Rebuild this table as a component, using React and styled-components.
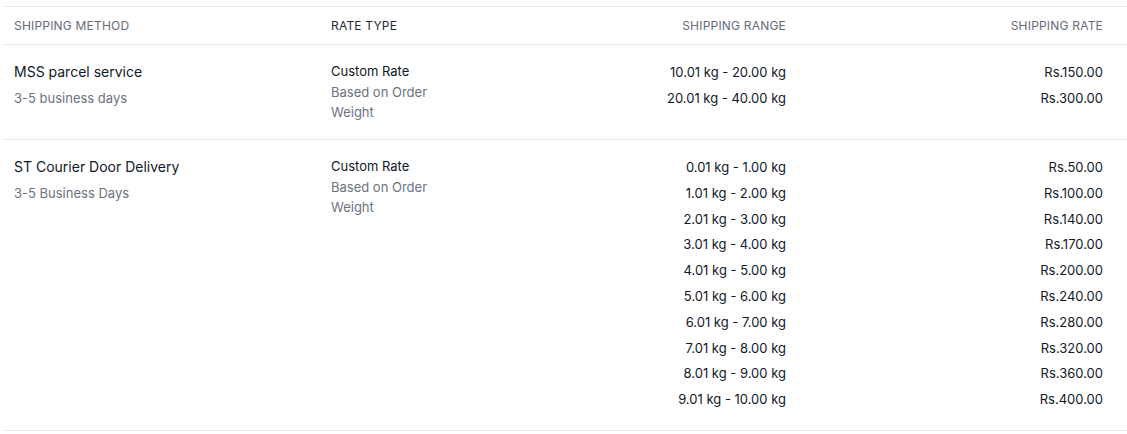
import styled, { createGlobalStyle } from "styled-components";

const GlobalStyle = createGlobalStyle`
  body {
    margin: 0;
    background: #ffffff;
    font-family: Inter, "Liberation Sans", sans-serif;
    -webkit-font-smoothing: antialiased;
  }
`;

const methods = [
  {
    name: "MSS parcel service",
    days: "3-5 business days",
    rates: [
      ["10.01 kg - 20.00 kg", "Rs.150.00"],
      ["20.01 kg - 40.00 kg", "Rs.300.00"],
    ],
  },
  {
    name: "ST Courier Door Delivery",
    days: "3-5 Business Days",
    rates: [
      ["0.01 kg - 1.00 kg", "Rs.50.00"],
      ["1.01 kg - 2.00 kg", "Rs.100.00"],
      ["2.01 kg - 3.00 kg", "Rs.140.00"],
      ["3.01 kg - 4.00 kg", "Rs.170.00"],
      ["4.01 kg - 5.00 kg", "Rs.200.00"],
      ["5.01 kg - 6.00 kg", "Rs.240.00"],
      ["6.01 kg - 7.00 kg", "Rs.280.00"],
      ["7.01 kg - 8.00 kg", "Rs.320.00"],
      ["8.01 kg - 9.00 kg", "Rs.360.00"],
      ["9.01 kg - 10.00 kg", "Rs.400.00"],
    ],
  },
];

function App() {
  return (
    <Page>
      <GlobalStyle />
      <Table>
        <HeaderRow>
          <HeadCell>Shipping Method</HeadCell>
          <HeadCell active>Rate Type</HeadCell>
          <HeadCell right>Shipping Range</HeadCell>
          <HeadCell right last>
            Shipping Rate
          </HeadCell>
        </HeaderRow>
        {methods.map((m) => (
          <Row key={m.name}>
            <Cell>
              <MethodName>{m.name}</MethodName>
              <MethodDays>{m.days}</MethodDays>
            </Cell>
            <Cell>
              <RateTitle>Custom Rate</RateTitle>
              <RateDesc>Based on Order Weight</RateDesc>
            </Cell>
            <Cell right>
              {m.rates.map(([range]) => (
                <Value key={range}>{range}</Value>
              ))}
            </Cell>
            <Cell right last>
              {m.rates.map(([range, price]) => (
                <Value key={range}>{price}</Value>
              ))}
            </Cell>
          </Row>
        ))}
      </Table>
    </Page>
  );
}

const Page = styled.div`
  padding: 6px 0 0 4px;
`;

const Table = styled.div`
  width: 100%;
  display: flex;
  flex-direction: column;
`;

const grid = `
  display: grid;
  grid-template-columns: 317px 200px 275px 1fr;
  border-bottom: 1px solid #e5e7eb;
`;

const HeaderRow = styled.div`
  ${grid}
  border-top: 1px solid #e5e7eb;
  height: 37px;
  align-items: center;
`;

const HeadCell = styled.div`
  padding: 0 ${(p) => (p.last ? "24px" : "10px")} 0 10px;
  font-size: 12px;
  letter-spacing: 0.2px;
  text-transform: uppercase;
  color: ${(p) => (p.active ? "#1f2937" : "#656b78")};
  text-align: ${(p) => (p.right ? "right" : "left")};
`;

const Row = styled.div`
  ${grid}
`;

const Cell = styled.div`
  padding: 17px ${(p) => (p.last ? "24px" : "10px")} 15px 10px;
  text-align: ${(p) => (p.right ? "right" : "left")};
`;

const MethodName = styled.div`
  font-size: 14px;
  line-height: 20px;
  color: #111827;
`;

const MethodDays = styled.div`
  margin-top: 6px;
  font-size: 13px;
  line-height: 20px;
  color: #6b7280;
`;

const RateTitle = styled.div`
  margin-top: -1px;
  font-size: 13px;
  line-height: 20px;
  color: #111827;
`;

const RateDesc = styled.div`
  margin-top: 1px;
  padding-bottom: 2px;
  width: 110px;
  font-size: 13px;
  line-height: 20px;
  color: #6b7280;
`;

const Value = styled.div`
  font-size: 13px;
  line-height: 20px;
  margin-bottom: 5.8px;
  color: #111827;
`;

export default App;
